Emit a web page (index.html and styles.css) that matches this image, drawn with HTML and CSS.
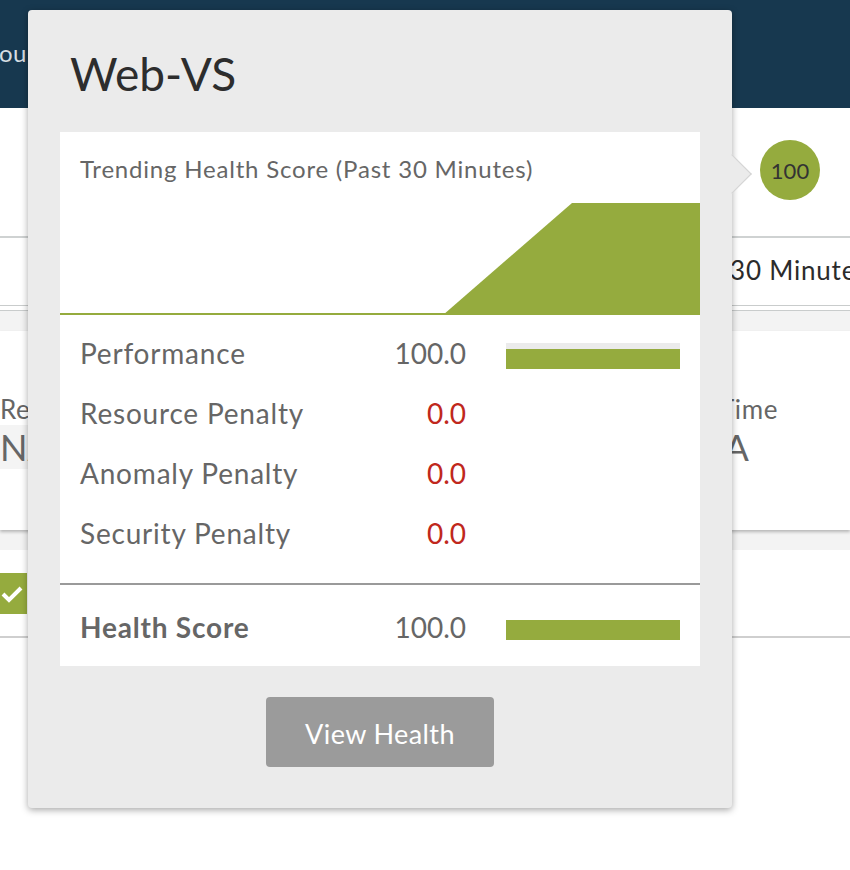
FILE: index.html
```html
<!DOCTYPE html>
<html lang="en">
<head>
  <meta charset="UTF-8"/>
  <title>Web-VS Health</title>
  <link rel="stylesheet" href="styles.css">
</head>
<body>

  <!-- page behind the popover -->
  <div class="topbar"><span class="topbar-text">ou</span></div>

  <div class="score-strip">
    <div class="score-badge">100</div>
  </div>

  <div class="time-row">
    <span class="time-text">30 Minutes</span>
  </div>

  <div class="gap-strip"></div>

  <div class="stat-card">
    <div class="stat">
      <div class="stat-label">Re</div>
      <div class="stat-value">NA</div>
    </div>
    <div class="stat stat-right">
      <div class="stat-label">Time</div>
      <div class="stat-value">NA</div>
    </div>
  </div>

  <div class="gap-strip"></div>

  <div class="check-row">
    <span class="check-box">
      <svg width="22" height="18" viewBox="0 0 22 18"><path d="M2 9 L8 15 L20 3" fill="none" stroke="#fff" stroke-width="4"/></svg>
    </span>
  </div>

  <!-- popover -->
  <div class="popover">
    <div class="popover-arrow"></div>
    <h1 class="popover-title">Web-VS</h1>

    <div class="panel">
      <div class="chart-title">Trending Health Score (Past 30 Minutes)</div>
      <svg class="chart" width="640" height="131" viewBox="0 0 640 131">
        <rect x="0" y="129" width="386" height="2" fill="#95ab3e"/>
        <polygon points="383,131 512,19 640,19 640,131" fill="#95ab3e"/>
      </svg>

      <div class="rows">
        <div class="row">
          <span class="row-label">Performance</span>
          <span class="row-value">100.0</span>
          <span class="bar-track"><span class="bar-fill" style="width:100%"></span></span>
        </div>
        <div class="row">
          <span class="row-label">Resource Penalty</span>
          <span class="row-value penalty">0.0</span>
          <span></span>
        </div>
        <div class="row">
          <span class="row-label">Anomaly Penalty</span>
          <span class="row-value penalty">0.0</span>
          <span></span>
        </div>
        <div class="row">
          <span class="row-label">Security Penalty</span>
          <span class="row-value penalty">0.0</span>
          <span></span>
        </div>
      </div>

      <div class="total">
        <div class="row">
          <span class="row-label total-label">Health Score</span>
          <span class="row-value">100.0</span>
          <span class="bar-plain"><span class="bar-fill" style="width:100%"></span></span>
        </div>
      </div>
    </div>

    <div class="btn-wrap">
      <button class="view-btn">View Health</button>
    </div>
  </div>

</body>
</html>
```

FILE: styles.css
```css
* {
  margin: 0; padding: 0; box-sizing: border-box;
}
body {
  font-family: Lato, "Open Sans", sans-serif;
  background: #fff;
  width: 850px;
  overflow: hidden;
}

/* background page */
.topbar {
  height: 108px;
  background: #17384f;
  display: flex; align-items: center;
}
.topbar-text {
  color: #d5dde2;
  font-size: 24px;
  letter-spacing: 0.5px;
  margin-left: -1px;
  margin-top: -4px;
}
.score-strip {
  height: 130px;
  display: flex; justify-content: flex-end; align-items: flex-start;
  border-bottom: 2px solid #cfd2d2;
  padding: 32px 30px 0 0;
}
.score-badge {
  width: 60px; height: 60px;
  border-radius: 50%;
  background: #95ab3e;
  color: #333;
  font-size: 22px;
  display: flex; align-items: center; justify-content: center;
}
.time-row {
  height: 73px;
  border-bottom: 1px solid #c9cccc;
  padding: 16px 0 0 730px;
  white-space: nowrap;
  overflow: hidden;
  position: relative;
}
.time-row::after {
  content: "";
  position: absolute; left: 0; right: 0; bottom: 4px;
  border-bottom: 1px solid #c9cccc;
}
.time-text {
  font-size: 26px;
  letter-spacing: 0.8px;
  color: #2b2b2b;
}
.gap-strip {
  height: 20px;
  background: #f3f3f3;
}
.stat-card {
  height: 199px;
  background: #fff;
  box-shadow: 0 2px 3px rgba(0,0,0,0.25);
  display: flex; justify-content: space-between;
  padding-top: 62px;
  position: relative;
}
.stat-label {
  font-size: 26px;
  letter-spacing: 0.6px;
  color: #666;
}
.stat-value {
  font-size: 36px;
  color: #666;
  background: #f4f4f4;
  padding-right: 4px;
}
.stat-right {
  margin-right: 72px;
}
.stat-right .stat-value {
  background: none;
  margin-left: -22px;
}
.check-row {
  height: 88px;
  border-bottom: 2px solid #cfcfcf;
  padding-top: 23px;
}
.check-box {
  display: flex; align-items: center; justify-content: center;
  width: 27px; height: 41px;
  background: #95ab3e;
  padding-right: 4px;
}

/* popover */
.popover {
  position: absolute;
  left: 28px; top: 10px;
  width: 704px; height: 798px;
  background: #ebebeb;
  border-radius: 4px;
  box-shadow: 0 2px 7px rgba(0,0,0,0.35);
  padding: 0 32px;
}
.popover-arrow {
  position: absolute;
  left: 690px; top: 150px;
  width: 28px; height: 28px;
  background: #ebebeb;
  border-top: 1px solid #d4d4d4;
  border-right: 1px solid #d4d4d4;
  transform: rotate(45deg);
}
.popover-title {
  font-size: 46px;
  font-weight: normal;
  color: #2d2d2d;
  height: 122px;
  line-height: 50px;
  padding: 39px 0 0 10px;
}
.panel {
  background: #fff;
}
.chart-title {
  font-size: 24px;
  letter-spacing: 0.8px;
  color: #666;
  line-height: 28px;
  padding: 23px 20px 0;
}
.chart {
  display: block;
  margin-top: 1px;
}
.rows {
  padding: 8px 0 20px;
  border-bottom: 2px solid #9a9a9a;
}
.row {
  display: grid;
  grid-template-columns: 1fr 100px 174px;
  gap: 40px;
  align-items: center;
  height: 60px;
  padding: 0 20px;
}
.row-label {
  font-size: 28px;
  letter-spacing: 0.8px;
  color: #666;
}
.row-value {
  font-size: 28px;
  color: #666;
  text-align: right;
}
.penalty {
  color: #c0281c;
}
.bar-track {
  display: flex; align-items: flex-end;
  height: 26px;
  background: #ebebeb;
  margin-top: 6px;
}
.bar-plain {
  display: flex;
  height: 20px;
  margin-top: 6px;
}
.bar-fill {
  display: block;
  height: 20px;
  background: #95ab3e;
}
.total {
  padding: 12px 0 9px;
}
.total-label {
  font-weight: bold;
}
.btn-wrap {
  display: flex; justify-content: center;
  padding-top: 31px;
}
.view-btn {
  width: 228px; height: 70px;
  padding-top: 3px;
  background: #9b9b9b;
  color: #fff;
  font-family: inherit;
  font-size: 27px;
  letter-spacing: 0.4px;
  border: none;
  border-radius: 4px;
  cursor: pointer;
}
```
